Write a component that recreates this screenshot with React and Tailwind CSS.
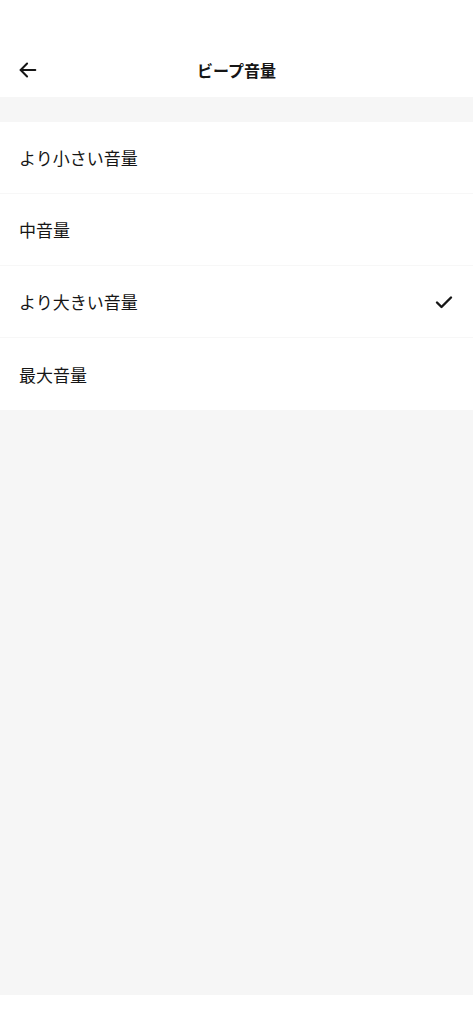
import React from "react";

const items = [
  { label: "より小さい音量", checked: false },
  { label: "中音量", checked: false },
  { label: "より大きい音量", checked: true },
  { label: "最大音量", checked: false },
];

export default function App() {
  return (
    <div className="w-[473px] h-[1024px] flex flex-col bg-white text-[#161616] font-['Noto_Sans_CJK_JP',sans-serif]">
      <div className="h-[97px] shrink-0 flex items-end pb-[7px] relative bg-white">
        <div className="w-full h-[40px] flex items-center justify-center relative">
          <button className="absolute left-[16px] top-[8px] w-[24px] h-[24px] flex items-center justify-center">
            <svg width="22" height="22" viewBox="0 0 24 24" fill="none" stroke="#161616" strokeWidth="2.2" strokeLinecap="round" strokeLinejoin="round">
              <path d="M20 12H4" />
              <path d="M11 5l-7 7 7 7" />
            </svg>
          </button>
          <span className="text-[16px] font-semibold">ビープ音量</span>
        </div>
      </div>
      <div className="h-[25px] shrink-0 bg-[#f6f6f6]" />
      <div className="flex flex-col bg-white">
        {items.map((it, i) => (
          <div
            key={i}
            className={`h-[72px] flex items-center justify-between pl-[19px] pr-[20px] ${i < items.length - 1 ? "border-b border-[#f7f7f7]" : ""}`}
          >
            <span className="text-[17px] leading-none">{it.label}</span>
            {it.checked && (
              <svg width="18" height="14" viewBox="0 0 18 14" fill="none" stroke="#161616" strokeWidth="2.4" strokeLinecap="round" strokeLinejoin="round">
                <path d="M2 7.5l4.5 4.5L16 2.5" />
              </svg>
            )}
          </div>
        ))}
      </div>
      <div className="flex-1 bg-[#f6f6f6]" />
      <div className="h-[29px] shrink-0 bg-white" />
    </div>
  );
}
